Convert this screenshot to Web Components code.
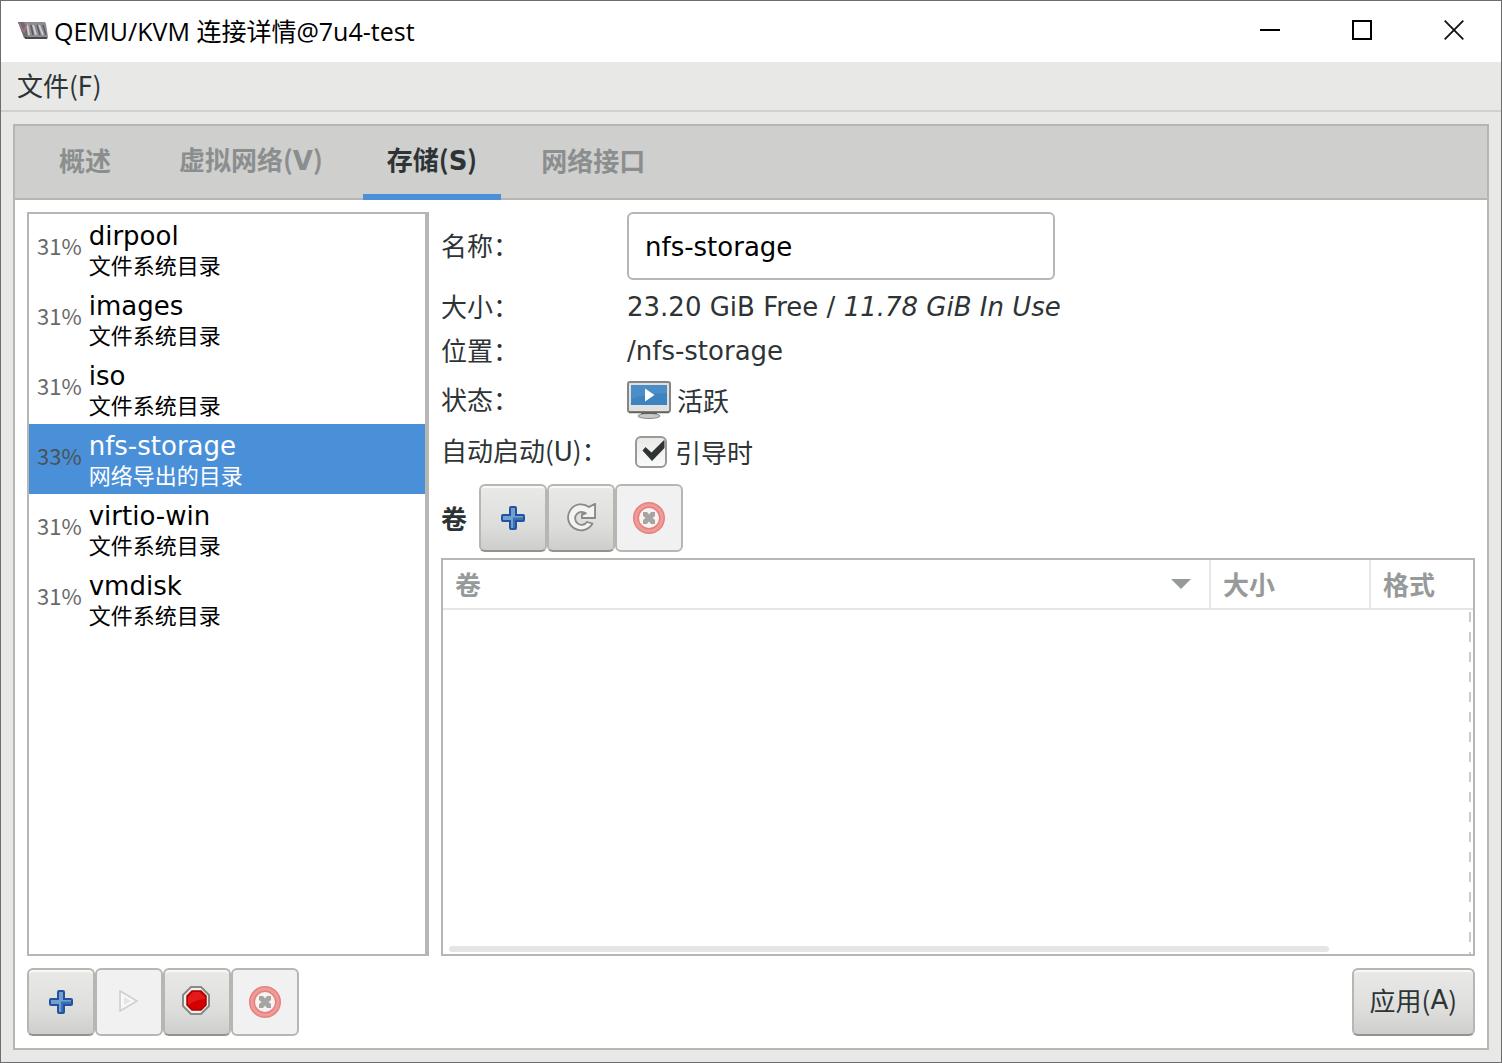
<!DOCTYPE html>
<html lang="zh-CN">
<head>
<meta charset="utf-8">
<title>QEMU/KVM 连接详情@7u4-test</title>
<style>
  body {
    margin: 0;
    min-height: 100vh;
    display: flex;
    --line: #b6b6b2;
    --blue: #4a90d9;
    --latin: "DejaVu Sans", "Noto Sans CJK SC", sans-serif;
    --cjk: "Noto Sans CJK SC", "DejaVu Sans", sans-serif;
    font: 26px/36px var(--cjk);
    color: #2e3436;
  }
</style>
</head>
<body>
<vm-window></vm-window>

<script>
class Base extends HTMLElement {
  connectedCallback() {
    if (this.shadowRoot) return;
    this.attachShadow({ mode: 'open' }).innerHTML =
      '<style>*{box-sizing:border-box}:host{box-sizing:border-box}.k{font-family:var(--latin)}</style>' + this.render();
  }
}

const ICONS = {
  logo: [32, 20, `
    <path d="M1 1h26q2 0 2 2l2 13q0 2-2 2H8z" fill="#8e8c90"/>
    <path d="M1 1h6l4 9-1 7H7z" fill="#6d6a70"/>
    <path d="M10 3l2 11M16 4l3 10M22 4l4 10" stroke="#cfccd1" stroke-width="2"/>
    <path d="M14 4l2 10M20 4l3 10M26 4l3 10" stroke="#5b595e" stroke-width="1.500"/>
    <path d="M2 2l5 9 3-8" fill="none" stroke="#a77482" stroke-width="1.500"/>
    <path d="M8 17h22" stroke="#49494c" stroke-width="2"/>`],
  min: [20, 20, `<path d="M0 10h20" stroke="#000" stroke-width="2"/>`],
  max: [20, 20, `<path d="M1 1h18v18H1z" fill="none" stroke="#000" stroke-width="2"/>`],
  close: [20, 20, `<path d="M.7.7l18.6 18.6M19.3.7L.7 19.3" stroke="#111" stroke-width="1.8"/>`],
  add: [32, 32, `
    <path d="M13 5h6v8h8v7h-8v8h-6v-8H5v-7h8z" fill="#fff" opacity=".6"/>
    <path d="M14 5h4q1 0 1 1v7h7q1 0 1 1v4q0 1-1 1h-7v7q0 1-1 1h-4q-1 0-1-1v-7H6q-1 0-1-1v-4q0-1 1-1h7V6q0-1 1-1z" fill="#739fcf" stroke="#2253a0" stroke-width="2"/>
    <path d="M16 15.500h10V18H18v8h-2z" fill="#3c70b4"/>`],
  refresh: [32, 32, `
    <path d="M30 2v14H17v-4h4.500a6.500 6.500 0 1 0 .5 8l5.500 1.500A13 13 0 1 1 24 5z" fill="#f3f3f1" stroke="#8a8b87" stroke-width="1.800" stroke-linejoin="round"/>
    <path d="M30 3v13H17v-3l5-2 3-6z" fill="#f3f3f1"/>
    <path d="M24 5l6-3v14H17v-3l4.500-2" fill="none" stroke="#8a8b87" stroke-width="1.800" stroke-linejoin="round"/>`],
  remove: [32, 32, `
    <circle cx="16" cy="16" r="13" fill="#f8f3f2" stroke="#e5807e" stroke-width="6"/>
    <circle cx="16" cy="16" r="13" fill="none" stroke="#ee9c99" stroke-width="3"/>
    <path d="M10 10h4l2 2.500 2-2.500h4v4l-2.500 2 2.500 2v4h-4l-2-2.500-2 2.500h-4v-4l2.500-2-2.500-2z" fill="#a5a5a2"/>`],
  play: [32, 32, `
    <path d="M7 5v20L24 15z" fill="#f8f8f7" stroke="#d0d1cf" stroke-width="1.700" stroke-linejoin="round"/>
    <path d="M11 11v8l7-4z" fill="#e3e7e3"/>`],
  stop: [32, 32, `
    <path d="M10 1h10l8 8v11l-8 8H10l-8-8V9z" fill="#f1f1ef" stroke="#888a85" stroke-width="2"/>
    <path d="M11 5h9l5 5v9l-5 5h-9l-5-5v-9z" fill="#d40000" stroke="#ab0000" stroke-width="1.500"/>
    <path d="M12 6h7l5 5v2Q16 13 7 19v-8z" fill="#ef2929" opacity=".6"/>`],
  monitor: [44, 38, `
    <ellipse cx="22" cy="35" rx="11" ry="2.500" fill="#c8c8c5" stroke="#8b8c89"/>
    <path d="M14 31h16v2H14z" fill="#60615f"/>
    <rect x="1" y="1" width="42" height="30" rx="2" fill="#e1e1df" stroke="#858683" stroke-width="2"/>
    <path d="M2 31.500h40" stroke="#62635f" stroke-width="1.500"/>
    <path d="M4 4h36v20H4z" fill="#3d82c1"/>
    <path d="M4 4h36v8Q18 13 4 18z" fill="#4c8dc7"/>
    <path d="M18 7.500v13L27.500 14z" fill="#fff"/>`],
  check: [32, 34, `<path d="M7.500 15.500l3-3.500 6 5.500L28.500 5.500h1V13L17 26z" fill="#2e3436"/>`],
  sort: [20, 10, `<path d="M0 0h20L10 10z" fill="#969a9a"/>`]
};

customElements.define('vm-icon', class extends Base {
  render() {
    const [w, h, body] = ICONS[this.getAttribute('name')];
    return `<style>:host{display:block;flex:none}svg{display:block}</style>
      <svg width="${w}" height="${h}" viewBox="0 0 ${w} ${h}" aria-hidden="true">${body}</svg>`;
  }
});

customElements.define('vm-button', class extends Base {
  render() {
    const label = this.getAttribute('label');
    return `<style>
      :host{display:block}
      button{display:flex;align-items:center;justify-content:center;min-width:68px;height:68px;padding:0 16px 4px;
        border:2px solid var(--line);border-bottom-color:#92928e;border-radius:6px;
        background:linear-gradient(#e9e9e8,#dededc 60%,#cececc);box-shadow:inset 0 2px #f8f8f7;
        font:inherit;color:inherit}
      button[aria-label]{padding:0}
      button:disabled{background:#f1f1f1;box-shadow:none;border-color:var(--line)}
      </style><button ${label ? `aria-label="${label}"` : ''} ${this.hasAttribute('disabled') ? 'disabled' : ''}><slot></slot></button>`;
  }
});

customElements.define('vm-titlebar', class extends Base {
  render() {
    return `<style>
      :host{display:flex;align-items:flex-start;height:61px;background:#fff;color:#000;padding-left:16px;gap:5px}
      vm-icon[name=logo]{margin-top:20px}
      h1{flex:1;margin:12px 0 0;font:25px/36px "Open Sans","Noto Sans CJK SC",sans-serif}
      .c{display:flex}
      button{width:92px;height:58px;display:grid;place-items:center;border:0;padding:0 2px 0 0;background:none}
      </style><vm-icon name="logo"></vm-icon><h1><slot></slot></h1>
      <div class="c"><button aria-label="最小化"><vm-icon name="min"></vm-icon></button>
      <button aria-label="最大化"><vm-icon name="max"></vm-icon></button>
      <button aria-label="关闭"><vm-icon name="close"></vm-icon></button></div>`;
  }
});

customElements.define('vm-menubar', class extends Base {
  render() {
    return `<style>
      :host{display:flex;height:50px;border-bottom:2px solid #d0d0ce;padding-left:16px}
      button{border:0;background:none;padding:0;font:inherit;color:inherit}
      </style><button>文件(<span class="k">F</span>)</button>`;
  }
});

customElements.define('vm-tab', class extends Base {
  render() {
    return `<style>
      :host{display:block}
      button{height:74px;padding:0 24px;border:0;border-bottom:6px solid transparent;background:none;
        font:inherit;font-weight:700;color:#8b8e8f}
      :host([selected]) button{color:#2e3436;border-color:var(--blue)}
      </style><button role="tab" aria-selected="${this.hasAttribute('selected')}"><slot></slot></button>`;
  }
});

customElements.define('vm-pool', class extends Base {
  render() {
    return `<style>
      :host{display:flex;align-items:center;height:70px;padding:0 8px;gap:7px;color:#000}
      :host([selected]){background:var(--blue);color:#fff}
      .p{font-size:22px;line-height:30px;color:#696969;padding-bottom:8px}
      :host([selected]) .p{color:#4b5258}
      .n{font:26px/30px var(--latin)}
      .t{font-size:22px;line-height:26px;padding-bottom:1px}
      </style><span class="p">${this.getAttribute('used')}</span>
      <div><div class="n">${this.getAttribute('name')}</div><div class="t"><slot></slot></div></div>`;
  }
});

customElements.define('vm-details', class extends Base {
  render() {
    return `<style>
      :host{display:grid;grid-template-columns:180px 428px 1fr;grid-template-rows:68px 42px 34px 52px 40px;gap:6px;align-items:center}
      label,.l{grid-column:1;white-space:nowrap;padding-bottom:2px}
      .v{grid-column:2;font-family:var(--latin);white-space:nowrap}
      input.name{grid-column:2;width:100%;min-width:0;height:68px;padding:2px 16px 0;border:2px solid var(--line);
        border-radius:6px;background:#fff;color:#000;font:26px/36px var(--latin)}
      .row{grid-column:2;display:flex;align-items:center;gap:6px}
      .row label{padding:0 2px}
      .box{display:grid;margin-left:8px}
      .box>*{grid-area:1/1}
      .box vm-icon{pointer-events:none}
      .box input{appearance:none;width:32px;height:32px;margin:1px 0;border:2px solid #999a96;border-radius:6px;
        background:linear-gradient(#e9e9e8,#fafafa)}
      .box input:not(:checked)+vm-icon{visibility:hidden}
      </style>
      <label for="name">名称：</label><input class="name" id="name" value="nfs-storage" size="1">
      <span class="l">大小：</span><span class="v">23.20 GiB Free / <i>11.78 GiB In Use</i></span>
      <span class="l">位置：</span><span class="v">/nfs-storage</span>
      <span class="l">状态：</span><span class="row"><vm-icon name="monitor"></vm-icon>活跃</span>
      <label for="auto">自动启动(<span class="k">U</span>)：</label>
      <span class="row"><span class="box"><input type="checkbox" id="auto" checked><vm-icon name="check"></vm-icon></span><label for="auto">引导时</label></span>`;
  }
});

customElements.define('vm-volumes', class extends Base {
  render() {
    return `<style>
      :host{display:block;position:relative;border:2px solid var(--line);background:#fff}
      table{width:100%;border-collapse:separate;border-spacing:0;table-layout:fixed}
      th{height:50px;padding:0 12px;text-align:left;color:#969a9a;border-bottom:2px solid #e6e6e6}
      th+th{width:160px}th+th+th{width:102px}
      th:not(:last-child){border-right:2px solid #e6e6e6}
      .s{display:flex;align-items:center;justify-content:space-between;padding-right:6px}
      .edge{position:absolute;right:2px;top:52px;bottom:0;width:2px;
        background:repeating-linear-gradient(#cbcbcb 0 10px,transparent 10px 20px)}
      .bar{position:absolute;left:6px;bottom:2px;width:86%;max-width:880px;height:6px;border-radius:3px;background:#e4e6e5}
      </style><table><thead><tr><th scope="col" aria-sort="descending"><div class="s">卷<vm-icon name="sort"></vm-icon></div></th>
      <th scope="col">大小</th><th scope="col">格式</th></tr></thead><tbody></tbody></table>
      <div class="edge"></div><div class="bar"></div>`;
  }
});

customElements.define('vm-window', class extends Base {
  render() {
    const dir = [['dirpool', '31%'], ['images', '31%'], ['iso', '31%'], ['nfs-storage', '33%'], ['virtio-win', '31%'], ['vmdisk', '31%']];
    return `<style>
      :host{display:flex;flex-direction:column;flex:1;min-width:0;border:1px solid #6d6d6d;background:#e8e8e6}
      .book{flex:1;display:flex;flex-direction:column;margin:12px;border:2px solid var(--line);background:#fff}
      nav{display:flex;gap:20px;height:74px;padding-left:20px;background:#cfcfcd;box-shadow:inset 0 -2px var(--line)}
      vm-tab+vm-tab+vm-tab{margin-left:-4px}
      .main{flex:1;display:flex;gap:12px;padding:12px 12px 0}
      .list{flex:0 0 402px;border:2px solid var(--line);border-right-width:4px;background:#fff}
      .side{flex:1;min-width:0;display:flex;flex-direction:column;gap:6px}
      .vol{display:flex;align-items:center;gap:12px;margin-top:6px}
      .grp{display:flex}
      vm-volumes{flex:1}
      footer{display:flex;justify-content:space-between;padding:12px}
      </style>
      <vm-titlebar>QEMU/KVM 连接详情@7u4-test</vm-titlebar>
      <vm-menubar></vm-menubar>
      <div class="book">
        <nav role="tablist"><vm-tab>概述</vm-tab><vm-tab>虚拟网络(<span class="k">V</span>)</vm-tab><vm-tab selected>存储(<span class="k">S</span>)</vm-tab><vm-tab>网络接口</vm-tab></nav>
        <div class="main">
          <div class="list" role="listbox" aria-label="存储池">${dir.map(([n, u]) =>
            `<vm-pool role="option" name="${n}" used="${u}"${u === '33%' ? ' selected aria-selected="true"' : ''}>${u === '33%' ? '网络导出的目录' : '文件系统目录'}</vm-pool>`).join('')}</div>
          <div class="side">
            <vm-details></vm-details>
            <div class="vol"><b>卷</b><div class="grp">
              <vm-button label="新建卷"><vm-icon name="add"></vm-icon></vm-button>
              <vm-button label="刷新"><vm-icon name="refresh"></vm-icon></vm-button>
              <vm-button label="删除卷" disabled><vm-icon name="remove"></vm-icon></vm-button></div></div>
            <vm-volumes></vm-volumes>
          </div>
        </div>
        <footer><div class="grp">
          <vm-button label="添加池"><vm-icon name="add"></vm-icon></vm-button>
          <vm-button label="启动池" disabled><vm-icon name="play"></vm-icon></vm-button>
          <vm-button label="停止池"><vm-icon name="stop"></vm-icon></vm-button>
          <vm-button label="删除池" disabled><vm-icon name="remove"></vm-icon></vm-button></div>
          <vm-button>应用(<span class="k">A</span>)</vm-button></footer>
      </div>`;
  }
});
</script>
</body>
</html>
